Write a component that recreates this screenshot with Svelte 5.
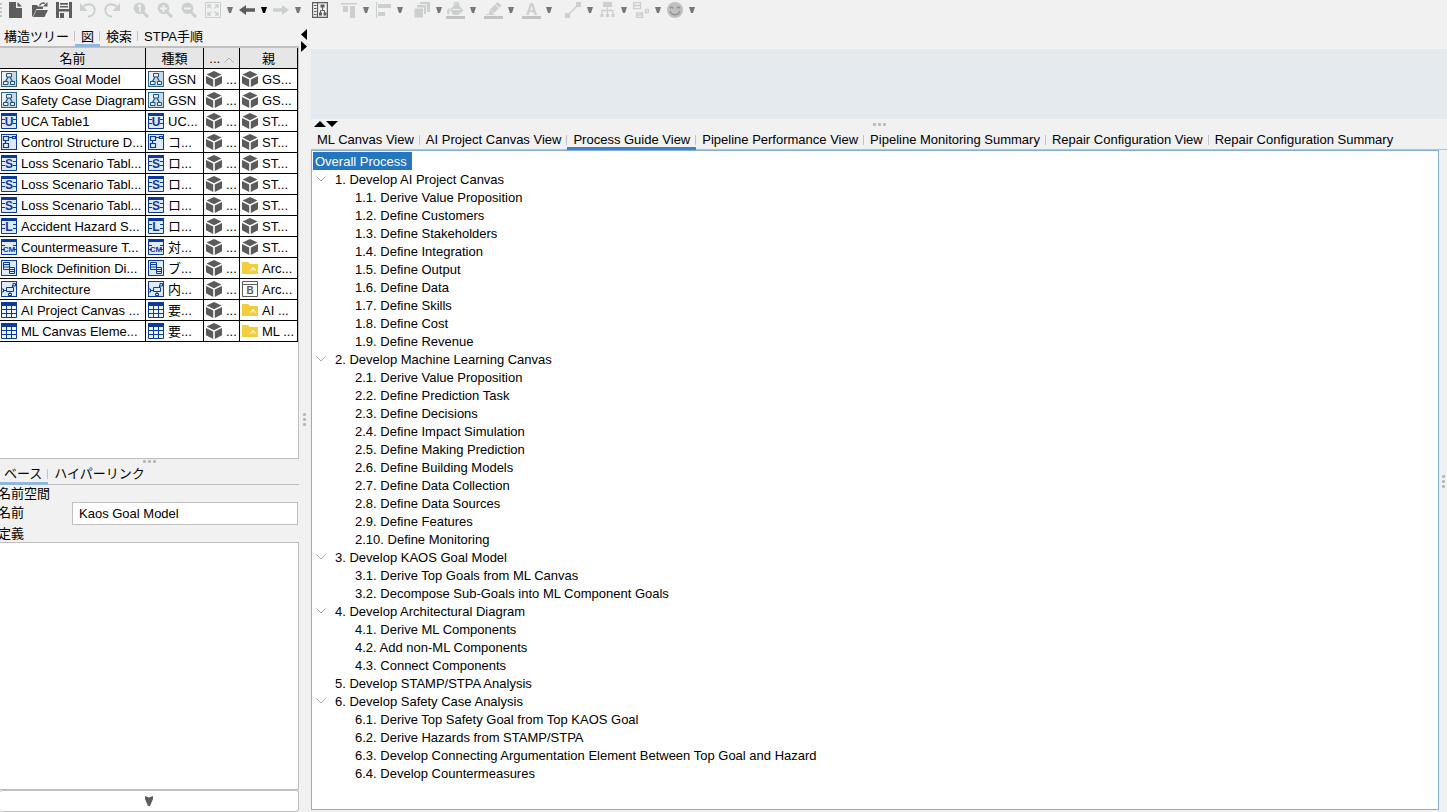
<script>
  const tools = [
    { icon: 'new', label: 'New', space: 's6' },
    { icon: 'open', label: 'Open', space: 's8' },
    { icon: 'save', label: 'Save', space: 's8' },
    { icon: 'undo', label: 'Undo', space: 's8' },
    { icon: 'redo', label: 'Redo', space: 's8' },
    { icon: 'zoom1', label: 'Actual size', space: 's13' },
    { icon: 'zoomIn', label: 'Zoom in', space: 's8' },
    { icon: 'zoomOut', label: 'Zoom out', space: 's8' },
    { icon: 'fit', label: 'Fit', space: 's8', menu: 'grey' },
    { icon: 'back', label: 'Back', space: 's6', menu: 'black' },
    { icon: 'forward', label: 'Forward', space: 's6', menu: 'grey' },
    { icon: 'sync', label: 'Show in structure', space: 's11' },
    { icon: 'alignTop', label: 'Align top', space: 's13', menu: 'grey' },
    { icon: 'alignLeft', label: 'Align left', space: 's6', menu: 'grey' },
    { icon: 'layers', label: 'Order', space: 's11', menu: 'grey' },
    { icon: 'fill', label: 'Fill color', space: 's4', menu: 'grey', wide: true },
    { icon: 'pen', label: 'Line color', space: 's8', menu: 'grey', wide: true },
    { icon: 'font', label: 'Font color', space: 's8', menu: 'grey', wide: true },
    { icon: 'line', label: 'Line style', space: 's13', menu: 'grey' },
    { icon: 'hierarchy', label: 'Layout', space: 's6', menu: 'grey' },
    { icon: 'boxes', label: 'Arrange', space: 's6', menu: 'grey' },
    { icon: 'smile', label: 'Marks', space: 's6', menu: 'grey' }
  ];

  const D = '#5d5d5d';
  const G = '#cbcfcf';
  const N = '#0a3a9e';
  const L = '#dfeaf8';

  const lens = `<circle cx="6.5" cy="6.3" r="5.8" fill="${G}"/><path d="M10 10l5 5" stroke="${G}" stroke-width="3"/>`;
  const sheet = (letter, size = 12) =>
    `<rect width="16" height="16" fill="${L}"/><path d="M.5 2v13.500h15V2M1 6.500h3M12 6.500h3M1 10.500h3M12 10.500h3" fill="none" stroke="${N}"/><rect width="16" height="3" fill="${N}"/><rect x="4" y="3" width="8" height="11" fill="${L}"/><text x="8" y="13" text-anchor="middle" font-family="Liberation Sans" font-weight="700" font-size="${size}" fill="${N}">${letter}</text>`;
  const frame = `<rect x=".5" y=".5" width="15" height="15" fill="${L}" stroke="${N}"/>`;

  const icons = {
    new: `<path d="M1 0h7v6h6v10H1z" fill="${D}"/><path d="M9.500 0L14 4.500H9.500z" fill="${D}"/>`,
    open: `<path d="M0 15V3h5l1 1.500h5V7H4.500L1.500 13z" fill="${D}"/><path d="M4.500 8H16l-3.500 7H1z" fill="${D}"/><path d="M7.500 3.500C9 .7 11.500.5 13 1.800" fill="none" stroke="${D}" stroke-width="1.500"/><path d="M15.500 0v4.500H11z" fill="${D}"/>`,
    save: `<path d="M0 0h16v16H0z" fill="${D}"/><path d="M3 0h10v7H3z" fill="#f1f1f1"/><path d="M4 1h8v1.700H4zM4 4h8v1.500H4z" fill="${D}"/><path d="M3 9.500h10V16H3z" fill="#f1f1f1"/><path d="M4 11h4v5H4z" fill="${D}"/>`,
    undo: `<path d="M3 5.500C6 .8 13 1 14.500 6.500c.8 4.500-2.500 7.500-6.500 8.300" fill="none" stroke="${G}" stroke-width="2"/><path d="M0 1v8h7.500z" fill="${G}"/>`,
    redo: `<path d="M13 5.500C10 .8 3 1 1.500 6.500.7 11 4 14 8 14.800" fill="none" stroke="${G}" stroke-width="2"/><path d="M16 1v8H8.500z" fill="${G}"/>`,
    zoom1: `${lens}<path d="M4.800 4.500L7 3v7" fill="none" stroke="#f1f1f1" stroke-width="1.600"/>`,
    zoomIn: `${lens}<path d="M3 6.500h7M6.500 3v7" stroke="#f1f1f1" stroke-width="2"/>`,
    zoomOut: `${lens}<path d="M3 6.500h7" stroke="#f1f1f1" stroke-width="2"/>`,
    fit: `<path d="M.5.5h15v15H.5z" fill="none" stroke="${G}"/><path d="M3 6V3h3M10 3h3v3M13 10v3h-3M6 13H3v-3M3 3l3.500 3.500M13 3L9.500 6.500M13 13L9.500 9.500M3 13l3.500-3.500" fill="none" stroke="${G}" stroke-width="1.300"/>`,
    back: `<path d="M0 8l7-5v3.200h9v3.600H7V13z" fill="${D}"/>`,
    forward: `<path d="M16 8L9 3v3.200H0v3.600h9V13z" fill="${G}"/>`,
    sync: `<path d="M.6.600h14.800v14.800H.6zM5.500 1v14" fill="none" stroke="${D}" stroke-width="1.200"/><path d="M2 3.500h2.500M2 6.500h2.500M2 9.500h2.500M2 12.500h2.500M10.500 5v4M8.500 11V8.500h4V11" fill="none" stroke="${D}"/><path d="M8.500 2.500h4v3h-4zM7 10.500h3v3H7zM11.500 10.500h3v3h-3z" fill="${D}"/>`,
    alignTop: `<path d="M0 1h16v1.500H0zM2 4h5v6H2zM9 4h5v12H9z" fill="${G}"/>`,
    alignLeft: `<path d="M1 0h1v16H1zM3 2h13v4H3zM3 10h7v4H3z" fill="${G}"/>`,
    layers: `<path d="M6 0h10v10H6z" fill="${G}"/><path d="M2.500 2.500h10v10h-10z" fill="${G}" stroke="#f1f1f1"/><path d="M0 6h9.500v10H0z" fill="${G}" stroke="#f1f1f1"/>`,
    fill: `<path d="M0 14h19v3H0z" fill="#c2c4c4"/><path d="M4 7l7-5.500 6.500 7L12 13H7z" fill="${G}"/><path d="M8.500 6V2c0-2 4-2 4 0v4" fill="none" stroke="${G}" stroke-width="1.500"/><path d="M3 6c-2 2-3 5-1 6.500C4 12 4 8 3 6z" fill="${G}"/><path d="M6 7.500h8" stroke="#f1f1f1"/>`,
    pen: `<path d="M0 14h19v3H0z" fill="#c2c4c4"/><path d="M5 12.500l1-5L13.500 0l4 3.500-8 8z" fill="${G}"/><path d="M2 12.500h8" stroke="${G}"/><path d="M7 8l2.500 2.500M11.500 2.500l3.500 3.500" stroke="#f1f1f1"/>`,
    font: `<path d="M0 14h19v3H0z" fill="#c2c4c4"/><text x="9.500" y="12.500" text-anchor="middle" font-family="Liberation Sans" font-weight="700" font-size="16" fill="${G}">A</text>`,
    line: `<path d="M2.500 13.500l11-11" stroke="${G}" stroke-width="1.500"/><path d="M0 11h5v5H0zM11 0h5v5h-5z" fill="${G}"/>`,
    hierarchy: `<path d="M8.500 3v10M3 12V8.500h11V12" fill="none" stroke="${G}" stroke-width="1.300"/><path d="M4 0h9v5H4zM1.500 12h3v3h-3zM7 12h3v3H7zM12.500 12h3v3h-3z" fill="${G}"/>`,
    boxes: `<path d="M.6.600h7v6h-7zM1 3.500h6M3.600 11h6v4.400h-6zM4 13h6M12.600 7.500h3v3h-3z" fill="none" stroke="${G}" stroke-width="1.300"/>`,
    smile: `<circle cx="8" cy="8" r="8" fill="#c0c0c0"/><path d="M3 6.500c.5-2 2.500-2 3 0M10 6.500c.5-2 2.500-2 3 0M3 9c1.500 5 8.500 5 10 0" fill="none" stroke="#929292" stroke-width="1.300"/>`,
    gsn: `<rect x=".5" y=".5" width="15" height="15" fill="#c9dae7" stroke="#2e6490"/><path d="M1 1h11L1 12z" fill="#e9f1f7"/><path d="M7 6L4.500 10.500M9 6l2.500 4.500" fill="none" stroke="#1f517c" stroke-width="1.200"/><path d="M5.500 2.500h5v3.500h-5zM2.500 10.500h4.500v3H2.500zM9.500 10.500h4v3h-4z" fill="#e8f0f6" stroke="#1f517c"/>`,
    uca: sheet('U'),
    loss: sheet('S'),
    hazard: sheet('L'),
    counter: sheet('CM', 8),
    control: `${frame}<path d="M2.500 2.500h5v4h-5zM2.500 9.500h5v4h-5zM11.500 2.500h3v2h-3zM8 3.500h3M4.500 7v2" fill="none" stroke="${N}" stroke-width="1.200"/>`,
    block: `${frame}<path d="M2.500 2.500h6v7h-6zM3 4.500h5M3 7h5M8.500 7.500h5v6h-5zM9 9.500h4M9 11.500h4" fill="${L}" stroke="${N}"/>`,
    arch: `${frame}<path d="M2 9.500h3M9 11v2M11.500 7V4" stroke="${N}"/><path d="M5.500 6.500h7v4h-7z" fill="${L}" stroke="${N}"/><path d="M.5 8h2v3h-2zM7.500 12.500h3v2h-3zM12 2.500h2.500V5H12z" fill="${L}" stroke="${N}"/>`,
    grid: `<path d="M.5.500h15v15H.5z" fill="#eef4fb" stroke="${N}"/><path d="M0 0h16v4H0z" fill="${N}"/><path d="M5.500 4v11M10.500 4v11M1 7.500h14M1 11.500h14" stroke="${N}"/>`,
    cube: `<path d="M8 0l7.500 3.500L8 7.200.5 3.500zM0 5l7.200 3.600V16L0 12.300zM16 5L8.800 8.600V16L16 12.300z" fill="#5c5a5b"/>`,
    folder: `<path d="M0 2h6l2 2h8v10H0z" fill="#f3cd3b"/><path d="M7.500 10.500h7L11 7z" fill="#fff8dc"/><path d="M9.500 10.500h3v-1h-3z" fill="#f3cd3b"/>`,
    part: `<path d="M.5.500h15v15H.5zM1 3.500h14" fill="#fff" stroke="#5d5d5d"/><text x="8" y="13" text-anchor="middle" font-family="Liberation Sans" font-weight="700" font-size="10" fill="#5d5d5d">B</text>`
  };

  const rows = [
    ['gsn', 'Kaos Goal Model', 'GSN', 'cube', 'GS...'],
    ['gsn', 'Safety Case Diagram', 'GSN', 'cube', 'GS...'],
    ['uca', 'UCA Table1', 'UC...', 'cube', 'ST...'],
    ['control', 'Control Structure D...', 'コ...', 'cube', 'ST...'],
    ['loss', 'Loss Scenario Tabl...', 'ロ...', 'cube', 'ST...'],
    ['loss', 'Loss Scenario Tabl...', 'ロ...', 'cube', 'ST...'],
    ['loss', 'Loss Scenario Tabl...', 'ロ...', 'cube', 'ST...'],
    ['hazard', 'Accident Hazard S...', 'ロ...', 'cube', 'ST...'],
    ['counter', 'Countermeasure T...', '対...', 'cube', 'ST...'],
    ['block', 'Block Definition Di...', 'ブ...', 'folder', 'Arc...'],
    ['arch', 'Architecture', '内...', 'part', 'Arc...'],
    ['grid', 'AI Project Canvas ...', '要...', 'folder', 'AI ...'],
    ['grid', 'ML Canvas Eleme...', '要...', 'folder', 'ML ...']
  ];

  const treeTabs = ['構造ツリー', '図', '検索', 'STPA手順'];
  const propTabs = ['ベース', 'ハイパーリンク'];
  const viewTabs = [
    'ML Canvas View',
    'AI Project Canvas View',
    'Process Guide View',
    'Pipeline Performance View',
    'Pipeline Monitoring Summary',
    'Repair Configuration View',
    'Repair Configuration Summary'
  ];

  const steps = [
    ['Develop AI Project Canvas', ['Derive Value Proposition', 'Define Customers', 'Define Stakeholders', 'Define Integration', 'Define Output', 'Define Data', 'Define Skills', 'Define Cost', 'Define Revenue']],
    ['Develop Machine Learning Canvas', ['Derive Value Proposition', 'Define Prediction Task', 'Define Decisions', 'Define Impact Simulation', 'Define Making Prediction', 'Define Building Models', 'Define Data Collection', 'Define Data Sources', 'Define Features', 'Define Monitoring']],
    ['Develop KAOS Goal Model', ['Derive Top Goals from ML Canvas', 'Decompose Sub-Goals into ML Component Goals']],
    ['Develop Architectural Diagram', ['Derive ML Components', 'Add non-ML Components', 'Connect Components']],
    ['Develop STAMP/STPA Analysis', []],
    ['Develop Safety Case Analysis', ['Derive Top Safety Goal from Top KAOS Goal', 'Derive Hazards from STAMP/STPA', 'Develop Connecting Argumentation Element Between Top Goal and Hazard', 'Develop Countermeasures']]
  ];

  let treeTab = $state(1);
  let propTab = $state(0);
  let viewTab = $state(2);
  let closed = $state({});
  let name = $state('Kaos Goal Model');
</script>

{#snippet icon(id, wide = false)}
  <svg class="icon" class:wide viewBox={wide ? '0 0 20 17' : '0 0 16 16'} aria-hidden="true">{@html icons[id]}</svg>
{/snippet}

{#snippet tabs(items, current, pick)}
  {#each items as item, i}
    <button class="tab" class:active={i === current} onclick={() => pick(i)}>{item}</button>
  {/each}
{/snippet}

{#snippet dots(vertical)}
  <span class="dots" class:vertical><i></i><i></i><i></i></span>
{/snippet}

<div class="app">
  <header class="toolbar">
    <span class="grip"><i></i><i></i><i></i><i></i></span>
    {#each tools as t}
      <button class="tool {t.space}" aria-label={t.label}>{@render icon(t.icon, t.wide)}</button>
      {#if t.menu}
        <button class="drop {t.wide ? 's4' : 's6'} {t.menu}" aria-label="{t.label} menu">
          <svg viewBox="0 0 6 6"><path d="M0 0h6L4 6H2z" fill="currentColor" /></svg>
        </button>
      {/if}
    {/each}
  </header>

  <div class="body">
    <aside class="side">
      <nav class="tabs inset">{@render tabs(treeTabs, treeTab, (i) => (treeTab = i))}</nav>
      <div class="list">
        <table>
          <colgroup><col class="c1" /><col class="c2" /><col class="c3" /><col class="c2" /></colgroup>
          <thead>
            <tr>
              <th>名前</th>
              <th>種類</th>
              <th>... <svg class="sort" viewBox="0 0 10 6"><path d="M.5 5.500L5 1l4.500 4.500" fill="none" stroke="#b0b0b0" /></svg></th>
              <th>親</th>
            </tr>
          </thead>
          <tbody>
            {#each rows as [kind, title, type, parentIcon, parent]}
              <tr>
                <td><div class="cell">{@render icon(kind)}<span>{title}</span></div></td>
                <td><div class="cell">{@render icon(kind)}<span>{type}</span></div></td>
                <td><div class="cell">{@render icon('cube')}<span>...</span></div></td>
                <td><div class="cell">{@render icon(parentIcon)}<span>{parent}</span></div></td>
              </tr>
            {/each}
          </tbody>
        </table>
      </div>
      <div class="split short">{@render dots(false)}</div>
      <nav class="tabs inset">{@render tabs(propTabs, propTab, (i) => (propTab = i))}</nav>
      <div class="form">
        <span class="row">名前空間</span>
        <div class="field">
          <label for="name">名前</label>
          <input id="name" bind:value={name} />
        </div>
        <label class="row" for="definition">定義</label>
        <textarea id="definition"></textarea>
        <button class="more" aria-label="More">
          <svg viewBox="0 0 8 10"><path d="M0 0l4 1.500L8 0v3L5 10H3L0 3z" fill="#5d5d5d" /></svg>
        </button>
      </div>
    </aside>

    <div class="gutter">
      <div class="arrows">
        <button aria-label="Collapse left"><svg viewBox="0 0 6 11"><path d="M6 0v11L0 5.500z" /></svg></button>
        <button aria-label="Expand right"><svg viewBox="0 0 6 11"><path d="M0 0v11l6-5.500z" /></svg></button>
      </div>
      {@render dots(true)}
    </div>

    <main>
      <div class="desk"></div>
      <div class="split">
        <div class="arrows">
          <button aria-label="Collapse up"><svg viewBox="0 0 12 6"><path d="M0 6h12L6 0z" /></svg></button>
          <button aria-label="Expand down"><svg viewBox="0 0 12 6"><path d="M0 0h12L6 6z" /></svg></button>
        </div>
        {@render dots(false)}
      </div>
      <nav class="tabs views">{@render tabs(viewTabs, viewTab, (i) => (viewTab = i))}</nav>
      <div class="lower">
        <section class="pane">
          <div class="root">Overall Process</div>
          <ul>
            {#each steps as [title, children], i}
              <li>
                <div class="step">
                  {#if children.length}
                    <button class="twisty" aria-label="Toggle {title}" aria-expanded={!closed[i]} onclick={() => (closed[i] = !closed[i])}>
                      <svg viewBox="0 0 10 6"><path d="M.5.500L5 5 9.500.500" fill="none" stroke="#a9a9a9" /></svg>
                    </button>
                  {/if}
                  <span>{i + 1}. {title}</span>
                </div>
                {#if children.length && !closed[i]}
                  <ul class="sub">
                    {#each children as child, j}
                      <li>{i + 1}.{j + 1}. {child}</li>
                    {/each}
                  </ul>
                {/if}
              </li>
            {/each}
          </ul>
        </section>
        <div class="edge">{@render dots(true)}</div>
      </div>
    </main>
  </div>
</div>

<style>
  :global(body) {
    background: #f1f1f1;
  }
  .app, .app * {
    box-sizing: border-box;
  }
  .app {
    display: flex;
    flex-direction: column;
    height: 100vh;
    overflow: hidden;
    font: 13px/18px "Liberation Sans", "Noto Sans CJK JP", sans-serif;
    color: #000;
  }
  button {
    padding: 0;
    border: 0;
    background: none;
    color: inherit;
    font: inherit;
  }
  svg {
    display: block;
    flex: none;
  }
  .icon {
    width: 16px;
    height: 16px;
  }
  .icon.wide {
    width: 20px;
    height: 17px;
  }
  .toolbar {
    display: flex;
    align-items: center;
    flex: none;
    height: 26px;
    padding-bottom: 6px;
  }
  .tool, .drop {
    flex: none;
  }
  .drop svg {
    width: 6px;
    height: 6px;
  }
  .grey { color: #777; }
  .black { color: #000; }
  .s4 { margin-left: 4px; }
  .s6 { margin-left: 6px; }
  .s8 { margin-left: 8px; }
  .s11 { margin-left: 11px; }
  .s13 { margin-left: 13px; }
  .grip {
    display: flex;
    flex-direction: column;
    gap: 2px;
    width: 2px;
  }
  .grip i {
    height: 2px;
    background: #c4c4c4;
  }
  .body {
    display: flex;
    flex: 1;
    min-height: 0;
  }
  .side {
    display: flex;
    flex-direction: column;
    flex: none;
    width: 299px;
  }
  .tabs {
    display: flex;
    flex: none;
    height: 21px;
    border-bottom: 1px solid #bfbfbf;
  }
  .tab {
    position: relative;
    height: 21px;
    padding: 0 6px;
    white-space: nowrap;
  }
  .tab + .tab::before {
    content: "";
    position: absolute;
    left: -1px;
    top: 5px;
    width: 1px;
    height: 10px;
    background: #c4c4c4;
  }
  .inset .tab:first-child {
    padding-left: 4px;
  }
  .tab.active::after {
    content: "";
    position: absolute;
    left: 0;
    right: 0;
    bottom: 0;
    height: 3px;
    background: #90b8df;
  }
  .views .tab.active::after {
    background: #3c80c6;
  }
  .views {
    height: 20px;
  }
  .views .tab {
    height: 20px;
  }
  .list {
    flex: 411 1 0;
    min-height: 0;
    overflow: hidden;
    border: 1px solid #bfbfbf;
    border-left: 0;
    background: #fff;
  }
  table {
    width: 100%;
    table-layout: fixed;
    border-spacing: 0;
  }
  .c1 { width: 146px; }
  .c2 { width: 58px; }
  .c3 { width: 36px; }
  th, td {
    height: 21px;
    padding: 0;
    border-right: 1px solid #000;
    border-bottom: 1px solid #000;
    white-space: nowrap;
    overflow: hidden;
  }
  th {
    padding-top: 2px;
    background: #e6e6e6;
    font-weight: 400;
  }
  .sort {
    display: inline-block;
    width: 10px;
    height: 6px;
  }
  .cell {
    display: flex;
    align-items: center;
    gap: 4px;
    height: 20px;
    padding-left: 2px;
  }
  .cell span {
    line-height: 20px;
    padding-top: 2px;
    height: 20px;
    line-height: 18px;
  }
  td:first-child .cell {
    padding-left: 1px;
  }
  .split {
    display: flex;
    align-items: center;
    justify-content: center;
    position: relative;
    flex: none;
    height: 11px;
  }
  .split.short {
    height: 5px;
  }
  .dots {
    display: flex;
    gap: 2px;
  }
  .dots.vertical {
    flex-direction: column;
  }
  .dots i {
    width: 3px;
    height: 3px;
    border-radius: 1px;
    background: #b9b9b9;
  }
  .form {
    display: flex;
    flex-direction: column;
    flex: 328 1 0;
    min-height: 0;
  }
  .row {
    flex: none;
    height: 17px;
    line-height: 17px;
  }
  .row, .field label {
    text-indent: -2px;
  }
  .field {
    display: flex;
    align-items: center;
    flex: none;
    height: 23px;
    padding-right: 1px;
  }
  .field label {
    width: 72px;
  }
  input {
    flex: 1;
    min-width: 0;
    height: 23px;
    padding: 0 6px;
    border: 1px solid #bfbfbf;
    background: #fff;
    font: inherit;
    outline: 0;
  }
  textarea {
    flex: 1;
    min-height: 0;
    border: 1px solid #bfbfbf;
    border-left: 0;
    background: #fff;
    font: inherit;
    resize: none;
    outline: 0;
  }
  .more {
    display: flex;
    align-items: center;
    justify-content: center;
    flex: none;
    height: 22px;
    border: 1px solid #bfbfbf;
    border-left: 0;
    border-radius: 3px;
    background: #fff;
  }
  .more svg {
    width: 8px;
    height: 10px;
  }
  .gutter {
    position: relative;
    display: flex;
    align-items: center;
    justify-content: center;
    flex: none;
    width: 12px;
    padding-right: 2px;
  }
  .arrows {
    position: absolute;
    display: flex;
  }
  .gutter .arrows {
    top: 3px;
    left: 2px;
    flex-direction: column;
    gap: 1px;
  }
  .gutter .arrows svg {
    width: 6px;
    height: 11px;
  }
  .split .arrows {
    left: 3px;
    top: 2px;
  }
  .split .arrows svg {
    width: 12px;
    height: 6px;
  }
  main {
    display: flex;
    flex-direction: column;
    flex: 1;
    min-width: 0;
  }
  .desk {
    flex: none;
    height: 70px;
    margin-top: 23px;
    background: #e5eaef;
  }
  .lower {
    display: flex;
    flex: 1;
    min-height: 0;
  }
  .pane {
    flex: 1;
    min-width: 0;
    margin-bottom: 2px;
    padding: 1px;
    border: 1px solid #86aed6;
    background: #fff;
    line-height: 20px;
    overflow: hidden;
  }
  .root {
    width: max-content;
    height: 18px;
    padding: 0 5px 0 2px;
    background: #2675bf;
    color: #fff;
  }
  ul {
    margin: 0;
    padding: 0;
    list-style: none;
  }
  .step {
    position: relative;
    height: 18px;
    padding-left: 22px;
  }
  .sub {
    padding-left: 42px;
  }
  .sub li {
    height: 18px;
  }
  .twisty {
    position: absolute;
    left: 3px;
    top: 6px;
  }
  .twisty svg {
    width: 10px;
    height: 6px;
  }
  .edge {
    display: flex;
    align-items: center;
    justify-content: center;
    flex: none;
    width: 8px;
  }
</style>
